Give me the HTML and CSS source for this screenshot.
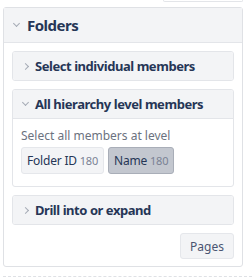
FILE: index.html
```html
<!DOCTYPE html>
<html lang="en">
<head>
    <meta charset="UTF-8">
    <meta name="viewport" content="width=device-width, initial-scale=1.0">
    <title>Folders</title>
    <link rel="stylesheet" href="styles.css">
</head>
<body>
    <div class="top-box"></div>

    <div class="panel">
        <div class="panel-head">
            <span class="chev down"></span>
            <span class="panel-title">Folders</span>
        </div>
        <div class="panel-body">
            <div class="section">
                <div class="section-head">
                    <span class="chev right"></span>
                    <span>Select individual members</span>
                </div>
            </div>

            <div class="section">
                <div class="section-head open">
                    <span class="chev down"></span>
                    <span>All hierarchy level members</span>
                </div>
                <div class="section-body">
                    <div class="hint">Select all members at level</div>
                    <div class="chips">
                        <button class="chip">Folder ID <span class="count">180</span></button>
                        <button class="chip active">Name <span class="count">180</span></button>
                    </div>
                </div>
            </div>

            <div class="section">
                <div class="section-head">
                    <span class="chev right"></span>
                    <span>Drill into or expand</span>
                </div>
            </div>

            <div class="actions">
                <button class="pages-btn">Pages</button>
            </div>
        </div>
    </div>

    <div class="dashed"></div>
</body>
</html>
```

FILE: styles.css
```css
body {
    font-family: "Noto Sans", sans-serif;
    background-color: #fff;
    margin: 0;
    padding: 0 9px 0 3px;
    color: #263656;
}

.top-box {
    height: 1px;
    margin-left: 160px;
    border: 1px solid #e3e5e9;
    border-top: none;
    border-radius: 0 0 3px 3px;
    margin-bottom: 5px;
}

.panel {
    border: 1px solid #dfe1e5;
    border-radius: 3px;
    background-color: #fff;
}

.panel-head {
    display: flex;
    align-items: center;
    height: 34px;
    padding-left: 10px;
    background-color: #f3f4f6;
    border-bottom: 1px solid #e3e5e9;
}

.panel-title {
    font-size: 15px;
    font-weight: bold;
    letter-spacing: -0.5px;
    margin-left: 8px;
}

.panel-body {
    padding: 8px 8px 7px 8px;
}

.chev {
    display: inline-block;
    width: 4px;
    height: 4px;
    border-right: 1px solid #a6abb5;
    border-bottom: 1px solid #a6abb5;
}

.chev.down {
    transform: rotate(45deg);
    margin-top: -3px;
}

.chev.right {
    transform: rotate(-45deg);
}

.section {
    border: 1px solid #e3e5e9;
    border-radius: 3px;
    margin-bottom: 8px;
    overflow: hidden;
}

.section-head {
    display: flex;
    align-items: center;
    gap: 7px;
    height: 28px;
    padding-left: 10px;
    background-color: #f3f4f6;
    font-size: 13px;
    font-weight: bold;
    letter-spacing: -0.45px;
}

.section-head.open {
    border-bottom: 1px solid #e3e5e9;
}

.section-body {
    padding: 8px 8px 12px 8px;
}

.hint {
    font-size: 12px;
    color: #6b7280;
    margin-bottom: 3px;
}

.chips {
    display: flex;
    gap: 4px;
}

.chip {
    font-family: inherit;
    font-size: 12px;
    letter-spacing: -0.2px;
    color: #263656;
    height: 27px;
    padding: 0 5px;
    background-color: #f3f4f6;
    border: 1px solid #e5e7eb;
    border-radius: 3px;
}

.chip.active {
    background-color: #c3c7cf;
    border-color: #a9aeb8;
}

.count {
    font-size: 11px;
    color: #7a8294;
}

.actions {
    display: flex;
    justify-content: flex-end;
}

.pages-btn {
    font-family: inherit;
    font-size: 12px;
    color: #4a5572;
    height: 26px;
    padding: 0 9px;
    background-color: #f3f4f6;
    border: 1px solid #e5e7eb;
    border-radius: 3px;
}

.dashed {
    margin-top: 9px;
    border-top: 1px dashed #dfe1e5;
    margin-right: -9px;
}
```
